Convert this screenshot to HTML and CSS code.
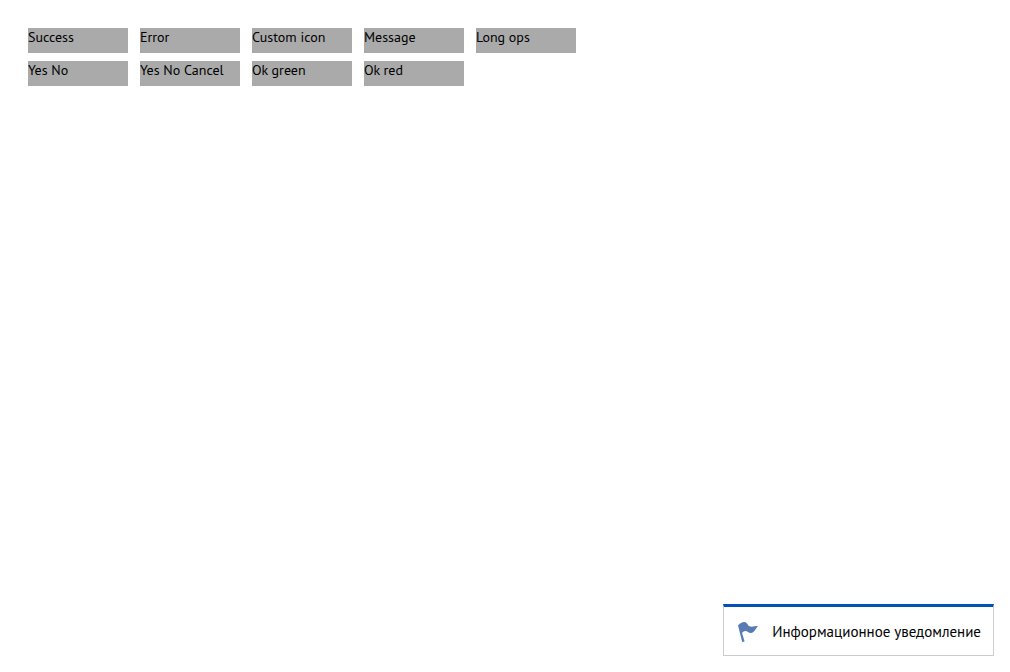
FILE: index.html
```html
<!DOCTYPE html>
<html lang="ru">
<head>
<meta charset="utf-8">
<title>Notifications</title>
<link rel="stylesheet" href="styles.css">
</head>
<body>
<main class="demo">
  <div class="row">
    <button type="button" class="action">Success</button>
    <button type="button" class="action">Error</button>
    <button type="button" class="action">Custom icon</button>
    <button type="button" class="action">Message</button>
    <button type="button" class="action">Long ops</button>
  </div>
  <div class="row">
    <button type="button" class="action">Yes No</button>
    <button type="button" class="action">Yes No Cancel</button>
    <button type="button" class="action">Ok green</button>
    <button type="button" class="action">Ok red</button>
  </div>
</main>
<div class="notice" role="status">
  <svg class="notice-icon" viewBox="0 0 20 20" aria-hidden="true"><path d="M0 3.200C2 1.400 4 0 6.200 0C9.300 0 9.500 3.500 11.500 4.300C14 5.200 17 4 20 4C17.800 6.500 16 11 13 11C10.400 11 9.500 9 7.400 9C5.800 9 4.600 10 4.100 11L6.600 19.500L4.200 20Z"/></svg>
  <span class="notice-text">Информационное уведомление</span>
</div>
</body>
</html>
```
FILE: styles.css
```css
body {
  margin: 0;
  background: #fff;
  color: #000;
  font-family: "PT Sans", "Noto Sans", sans-serif;
}

.demo {
  display: flex;
  flex-direction: column;
  gap: 8px;
  padding: 28px;
}

.row {
  display: flex;
  flex-wrap: wrap;
  gap: 8px 12px;
}

.action {
  display: flex;
  align-items: flex-start;
  width: 100px;
  height: 25px;
  padding: 0;
  border: 0;
  background: #aaa;
  color: inherit;
  font: inherit;
  font-size: 14px;
  line-height: 18px;
  white-space: nowrap;
  cursor: pointer;
}

.notice {
  position: fixed;
  right: 16px;
  bottom: 16px;
  display: flex;
  align-items: center;
  gap: 14px;
  padding: 14px 12px 13px 14px;
  border: 1px solid #ccc;
  border-top: 3px solid #0052b8;
  background: #fff;
}

.notice-icon {
  flex: none;
  width: 20px;
  height: 20px;
  fill: #587bb5;
}

.notice-text {
  font-size: 15px;
  line-height: 21px;
  white-space: nowrap;
}
```
